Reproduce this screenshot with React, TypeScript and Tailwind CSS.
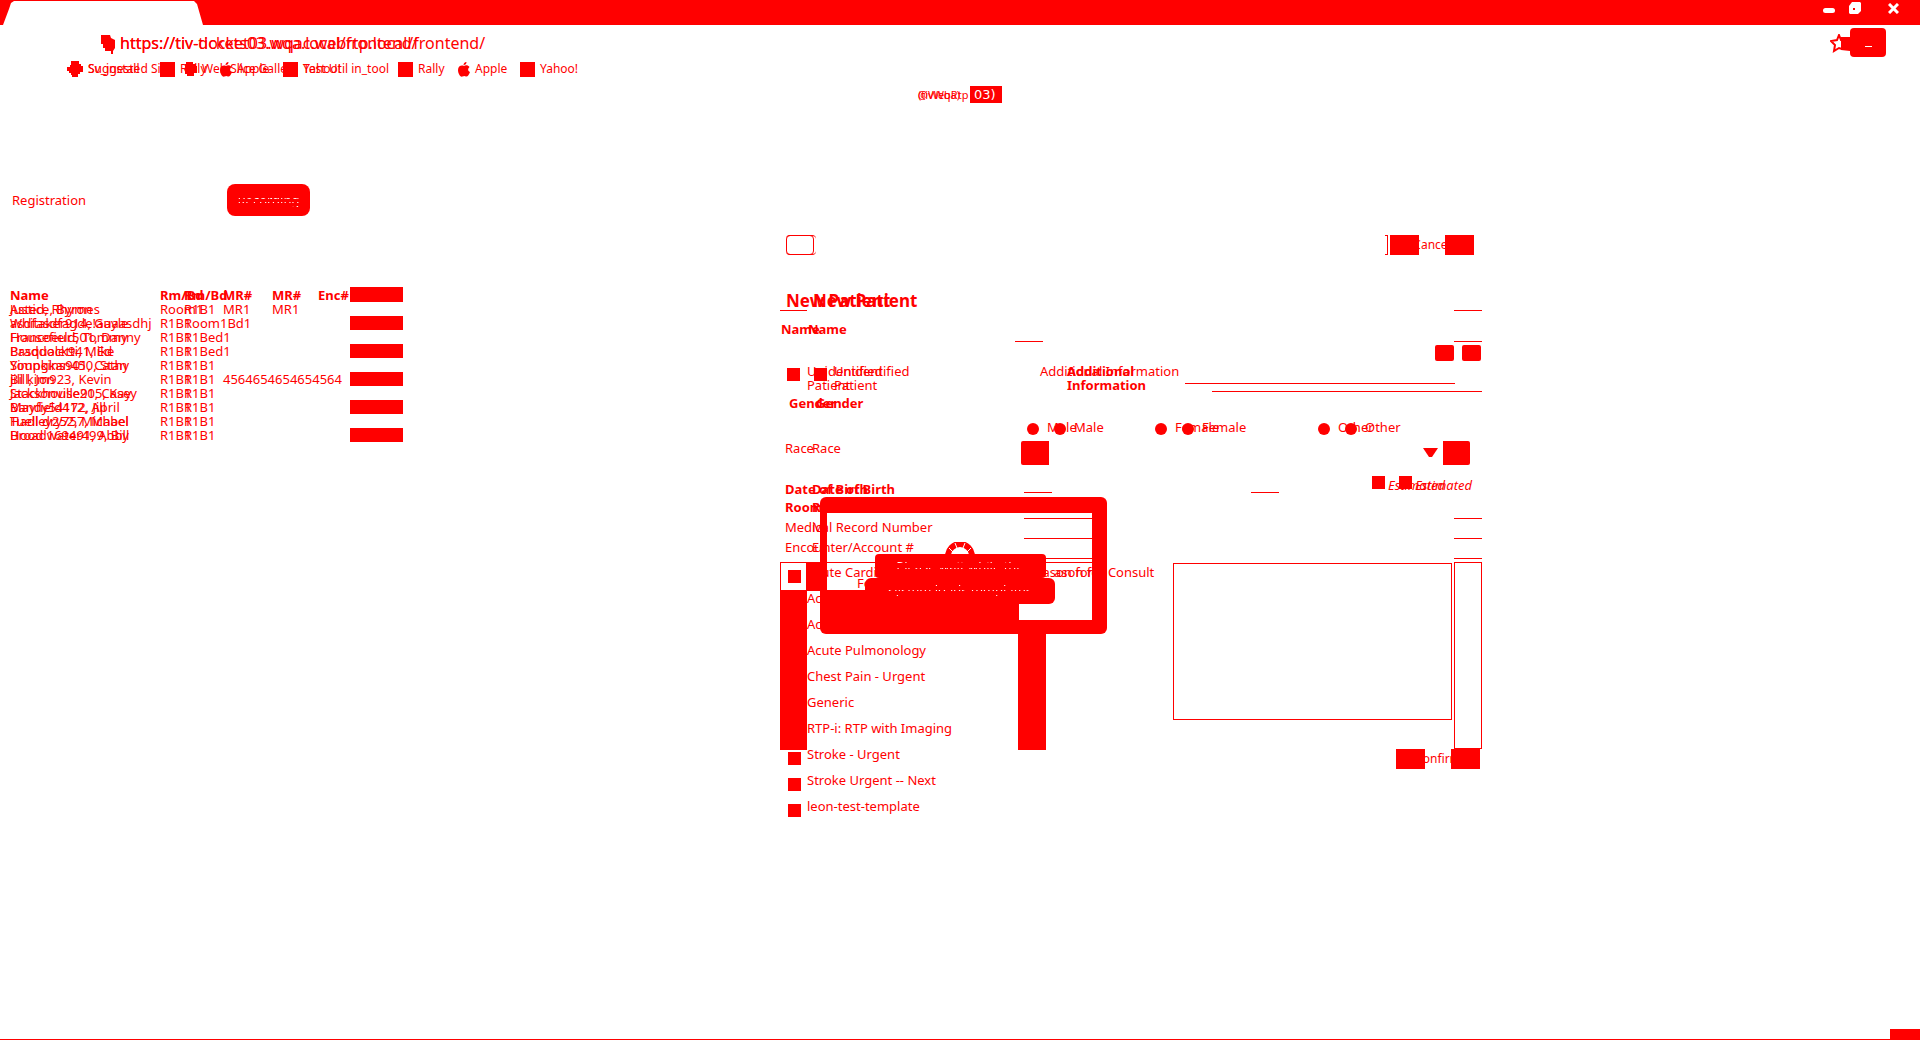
import type { ReactNode } from "react";

const overlay = "col-start-1 row-start-1";

function Twin({ a, b, className = "" }: { a: ReactNode; b?: ReactNode; className?: string }) {
  return (
    <span className={`grid justify-items-start whitespace-nowrap ${className}`}>
      <span className={overlay}>{a}</span>
      <span aria-hidden="true" className={`${overlay} ml-[27px]`}>{b ?? a}</span>
    </span>
  );
}

function AppleIcon() {
  return (
    <svg viewBox="0 0 12 15" className="h-[15px] w-3 shrink-0" fill="#ff0000" aria-hidden="true">
      <path d="M6 4C7 3 10 2.600 11.500 5C9.500 6.500 9.700 9 12 10C11 13 9.500 15 8 14.500C6.500 13.800 6 13.800 4.500 14.500C2 15.500 0 11 0 8C0 4 3.500 2.800 6 4ZM5.500 3C5.500 1.500 6.500 0 8.500 0C8.500 1.800 7.500 3 5.500 3Z" />
    </svg>
  );
}

function CrossIcon() {
  return (
    <svg viewBox="0 0 16 16" className="size-4 shrink-0" fill="#ff0000" aria-hidden="true">
      <path d="M4 0H12V3H14V5H16V11H13V13H11V16H5V14H4V12H2V10H0V6H3V4H4Z" />
    </svg>
  );
}

function BlobIcon() {
  return (
    <svg viewBox="0 0 12 14" className="h-[14px] w-3 shrink-0" fill="#ff0000" aria-hidden="true">
      <path d="M1 0H8V2H11V4H12V11H9V14H2V12H0V2H1Z" />
    </svg>
  );
}

const Square = () => <span className="h-[15px] w-[15px] shrink-0 bg-[#ff0000]" />;

function Bookmark({ icon, label, className }: { icon: ReactNode; label: string; className: string }) {
  return (
    <a href="#" className={`flex shrink-0 items-center gap-[5px] whitespace-nowrap ${className}`}>
      {icon}
      <span>{label}</span>
    </a>
  );
}

function BrowserChrome() {
  return (
    <header>
      <div className="flex h-[25px] justify-between bg-[#ff0000]">
        <svg viewBox="0 0 204 25" className="h-[25px] w-[204px]" aria-hidden="true">
          <path d="M3 25L9 9L11 3L14 1H194L197 4L203 25Z" fill="#ffffff" />
        </svg>
        <div className="flex h-4 items-start pr-[21px] text-white">
          <button aria-label="Minimize" className="mt-2 mr-[14px] h-[5px] w-3 rounded-sm bg-white" />
          <button aria-label="Restore" className="mt-0.5 mr-[27px]">
            <svg viewBox="0 0 12 12" className="size-3" aria-hidden="true">
              <path d="M3 0H11L12 1V9L9 12H1L0 11V4Z" fill="#ffffff" />
              <path d="M4 6H6V8H4Z" fill="#ff0000" />
            </svg>
          </button>
          <button aria-label="Close" className="mt-[3px]">
            <svg viewBox="0 0 11 11" className="size-[11px]" aria-hidden="true">
              <path d="M1 1L10 10M10 1L1 10" stroke="#ffffff" strokeWidth="3" />
            </svg>
          </button>
        </div>
      </div>

      <div className="flex h-8 items-start">
        <svg viewBox="0 0 15 19" className="mt-[10px] ml-[101px] h-[19px] w-[15px]" fill="#ff0000" aria-hidden="true">
          <path d="M0 0H9L10 3L14 5V13L12 16V19H10V16H4V13H2V9H0Z" />
        </svg>
        <div className="ml-1 grid pt-[7px] text-base leading-[22px]">
          <span className={overlay}>https://tiv-tickets03.wqa.local/frontend/</span>
          <span aria-hidden="true" className={overlay}>https://tiv-docket03.wqac.webrtp.local/frontend/</span>
        </div>
        <div className="mt-[3px] mr-[34px] ml-auto flex items-start">
          <svg viewBox="0 0 20 20" className="mt-1.5 h-5 w-[20px]" aria-hidden="true">
            <path d="M9 1L11 6L19 7V15H12L9 14L4 17L5 11L1 7L7 6Z" fill="#ffffff" stroke="#ff0000" strokeWidth="2" />
            <path d="M11 3L20 3V17L11 16Z" fill="#ff0000" />
          </svg>
          <button aria-label="Menu" className="flex h-[29px] w-9 items-center justify-center rounded-sm bg-[#ff0000] pt-2">
            <span className="h-px w-[7px] bg-white" />
          </button>
        </div>
      </div>

      <div className="grid h-6 items-center pl-[67px] text-xs leading-4">
        <nav aria-label="Bookmarks" className={`${overlay} flex items-center`}>
          <Bookmark icon={<CrossIcon />} label="Suggested Sit" className="w-[93px]" />
          <Bookmark icon={<Square />} label="Rally" className="w-[60px]" />
          <Bookmark icon={<AppleIcon />} label="Apple" className="w-[63px]" />
          <Bookmark icon={<Square />} label="Yahoo!" className="w-[60px]" />
        </nav>
        <nav aria-label="More bookmarks" className={`${overlay} flex items-center`}>
          <Bookmark icon={<CrossIcon />} label="Sv_install" className="w-[118px]" />
          <Bookmark icon={<BlobIcon />} label="Web Slice Galle" className="w-[98px]" />
          <Bookmark icon={<Square />} label="Test Util in_tool" className="w-[115px]" />
          <Bookmark icon={<Square />} label="Rally" className="w-[60px]" />
          <Bookmark icon={<AppleIcon />} label="Apple" className="w-[62px]" />
          <Bookmark icon={<Square />} label="Yahoo!" className="w-[80px]" />
        </nav>
      </div>

      <div className="flex h-[27px] justify-center pt-[5px] text-[11px] leading-[17px]">
        <div className="grid w-[52px] whitespace-nowrap">
          <span className={overlay}>@WebRtp</span>
          <span aria-hidden="true" className={overlay}>(tivWqa)</span>
        </div>
        <span className="h-[17px] w-8 bg-[#ff0000] pl-1 font-['DejaVu_Sans'] text-[13px] text-white">03)</span>
      </div>
    </header>
  );
}

type Patient = { name: string; other: string; room: string; bed: string; mr?: string; mr2?: string };

const patients: Patient[] = [
  { name: "Justice, Byron", other: "Asted, Rhymes", room: "Room1", bed: "R1B1", mr: "MR1", mr2: "MR1" },
  { name: "Whitaker914, Gayle", other: "asdfasdfagde!auaasdhj", room: "R1B1", bed: "Room1Bd1" },
  { name: "Francoeur501, Danny", other: "Housefield, Tommy", room: "R1B1", bed: "R1Bed1" },
  { name: "Braddock941, Ed", other: "Pasqualetti, Mike", room: "R1B1", bed: "R1Bed1" },
  { name: "Youngkan450, Stan", other: "Simpkins901, Cathy", room: "R1B1", bed: "R1B1" },
  { name: "Bill, Jon", other: "jill kim923, Kevin", room: "R1B1", bed: "R1B1", mr: "4564654654654564" },
  { name: "Jacksonville905, Kay", other: "Stackhouse21, Casey", room: "R1B1", bed: "R1B1" },
  { name: "Mayfield412, April", other: "Bandy54172, Jill", room: "R1B1", bed: "R1B1" },
  { name: "Hadley252, Michael", other: "Tuell dry757, Mabel", room: "R1B1", bed: "R1B1" },
  { name: "Broadwater499, Bill", other: "Hood 169491, Abby", room: "R1B1", bed: "R1B1" },
];

function PatientPanel() {
  return (
    <section className="pt-[76px]">
      <div className="flex h-8 items-center pl-3">
        <button className="w-[215px] text-left leading-5">
          <span className="grid">
            <span className={overlay}>Registration</span>
          </span>
        </button>
        <button className="h-8 w-[83px] rounded-lg bg-[#ff0000] leading-5">
          <span className="bg-[repeating-linear-gradient(#ff0000_0px,#ff0000_3px,#ffffff_3px,#ffffff_4px)] bg-clip-text text-transparent">
            Recording
          </span>
        </button>
      </div>
      <table className="mt-[71px] ml-2.5 w-[393px] table-fixed border-collapse text-left leading-[14px]">
        <colgroup>
          <col className="w-[150px]" />
          <col className="w-[63px]" />
          <col className="w-[49px]" />
          <col className="w-[46px]" />
          <col className="w-8" />
          <col />
        </colgroup>
        <thead>
          <tr className="h-[15px] whitespace-nowrap">
            <th className="p-0">Name</th>
            <th className="p-0">
              <span className="grid justify-items-start">
                <span className={overlay}>Rm/Bd</span>
                <span className={`${overlay} ml-6`}>Rm/Bd</span>
              </span>
            </th>
            <th className="p-0">MR#</th>
            <th className="p-0">MR#</th>
            <th className="p-0">Enc#</th>
            <th className="bg-[#ff0000] p-0" aria-label="Status" />
          </tr>
        </thead>
        <tbody>
          {patients.map((p, i) => (
            <tr key={p.name} className="h-[14px] whitespace-nowrap">
              <td className="p-0">
                <span className="grid justify-items-start">
                  <span className={overlay}>{p.name}</span>
                  <span className={overlay}>{p.other}</span>
                </span>
              </td>
              <td className="p-0">
                <span className="grid justify-items-start">
                  <span className={overlay}>{p.room}</span>
                  <span className={`${overlay} ml-6`}>{p.bed}</span>
                </span>
              </td>
              <td className="p-0">{p.mr}</td>
              <td className="p-0">{p.mr2}</td>
              <td className="p-0" />
              <td className={i % 2 === 1 ? "bg-[#ff0000] p-0" : "p-0"} />
            </tr>
          ))}
        </tbody>
      </table>
    </section>
  );
}

function Rule({ left, middle, leftWidth = "w-[28px]" }: { left: string; middle?: boolean; leftWidth?: string }) {
  return (
    <div className={`flex h-px justify-between pr-px ${left}`}>
      <span className={`bg-[#ff0000] ${leftWidth}`} />
      {middle ? <span className="mr-[203px] w-[28px] bg-[#ff0000]" /> : <span className="w-[28px] bg-[#ff0000]" />}
    </div>
  );
}

function TwinBoxes({ type, name, label }: { type: "checkbox" | "radio"; name: string; label: string }) {
  const shape = type === "radio" ? "size-3 rounded-full" : "size-[13px]";
  const gap = type === "radio" ? "gap-[15px]" : "gap-[14px]";
  return (
    <span className={`flex shrink-0 ${gap}`}>
      <input type={type} name={name} aria-label={label} className={`appearance-none bg-[#ff0000] ${shape}`} />
      <span className={`bg-[#ff0000] ${shape}`} />
    </span>
  );
}

function RadioOption({ label, className }: { label: string; className: string }) {
  return (
    <label className={`grid shrink-0 justify-items-start ${className}`}>
      <span className={`${overlay} pt-1.5`}>
        <TwinBoxes type="radio" name="gender" label={label} />
      </span>
      <Twin a={label} className={`${overlay} ml-5 leading-5`} />
    </label>
  );
}

function EndButton({ label, className }: { label: string; className: string }) {
  return (
    <button className={`flex h-5 items-center justify-center bg-[linear-gradient(90deg,#ff0000_29px,transparent_29px,transparent_55px,#ff0000_55px)] text-xs leading-5 ${className}`}>
      {label}
    </button>
  );
}

const templates = [
  "Acute Cardiology",
  "Acute Neurology",
  "Acute Pediatrics",
  "Acute Pulmonology",
  "Chest Pain - Urgent",
  "Generic",
  "RTP-i: RTP with Imaging",
  "Stroke - Urgent",
  "Stroke Urgent -- Next",
  "leon-test-template",
];

function LoadingDialog() {
  return (
    <div
      role="dialog"
      aria-label="Loading"
      className="absolute top-[262px] left-10 h-[137px] w-[287px] rounded-md bg-[linear-gradient(#ff0000,#ff0000),linear-gradient(#ff0000,#ff0000),linear-gradient(#ff0000,#ff0000),linear-gradient(#ff0000,#ff0000),linear-gradient(#ff0000,#ff0000)] bg-[size:100%_16px,7px_100%,15px_100%,100%_14px,199px_44px] bg-[position:top,left,right,bottom,left_bottom] bg-no-repeat"
    >
      <div className="flex flex-col items-center pt-[45px] pr-[7px]">
        <svg viewBox="0 0 30 12" className="h-3 w-[30px]" aria-hidden="true">
          <path d="M3 14A12 12 0 0 1 27 14" fill="none" stroke="#ff0000" strokeWidth="6" />
          <path d="M4 6L8 10M10 1L12 6M20 1L18 6M26 6L22 10" stroke="#ffffff" />
        </svg>
        <div className="h-6 w-[171px] rounded-sm bg-[#ff0000] text-center leading-6 whitespace-nowrap">
          <span className="bg-[repeating-linear-gradient(#ff0000_0px,#ff0000_5px,#ffffff_5px,#ffffff_6px)] bg-clip-text text-transparent">
            Please wait while the
          </span>
        </div>
        <div className="h-[26px] w-[190px] rounded-md bg-[#ff0000] text-center leading-6 whitespace-nowrap">
          <span className="bg-[repeating-linear-gradient(#ff0000_0px,#ff0000_4px,#ffffff_4px,#ffffff_5px)] bg-clip-text text-transparent">
            system loads templates
          </span>
        </div>
      </div>
    </div>
  );
}

function PatientForm() {
  return (
    <form className="relative pt-[127px]">
      <div className="relative">
        <div className="flex h-5 justify-between pr-[9px] pl-1.5">
          <button type="button" aria-label="Back" className="grid h-5 w-[30px]">
            <span className={`${overlay} w-7 rounded-sm border border-[#ff0000]`} />
            <span className={`${overlay} rounded-sm border-y border-[#ff0000]`} />
          </button>
          <div className="flex">
            <span className="mr-0.5 w-[3px] border-y border-r border-[#ff0000]" />
            <EndButton label="Cancel" className="w-[84px]" />
          </div>
        </div>

        <h1 className="h-[55px] pt-[34px] pl-1.5 text-[17px] leading-6 font-bold">
          <Twin a="New Patient" />
        </h1>
        <Rule left="pl-0" leftWidth="w-[27px]" />

        <div className="flex h-[30px] pt-2 pl-px leading-5 font-bold">
          <label htmlFor="name" className="w-[234px]">
            <Twin a="Name" />
          </label>
          <input id="name" className="min-w-0 flex-1 bg-transparent" />
        </div>
        <Rule left="pl-[235px]" />

        <div className="flex h-5 justify-end gap-2 pt-[3px] pr-0.5">
          <button type="button" aria-label="Add" className="h-4 w-[19px] rounded-xs bg-[#ff0000]" />
          <button type="button" aria-label="Remove" className="h-4 w-[19px] rounded-xs bg-[#ff0000]" />
        </div>

        <div className="flex h-[33px] leading-[14px]">
          <label className="grid w-[260px] pt-0.5 pl-[7px]">
            <span className={`${overlay} pt-1`}>
              <TwinBoxes type="checkbox" name="unidentified" label="Unidentified Patient" />
            </span>
            <Twin a={<>Unidentified<br />Patient</>} className={`${overlay} ml-5`} />
          </label>
          <label htmlFor="info" className="grid w-[145px] shrink-0 justify-items-start pt-0.5 whitespace-nowrap">
            <span className={overlay}>Additional Information</span>
            <span className={`${overlay} ml-[27px] font-bold`}>Additional<br />Information</span>
          </label>
          <div className="flex flex-1 flex-col gap-[7px] pt-[21px]">
            <span className="mr-7 h-px bg-[#ff0000]" />
            <span className="mr-px ml-[27px] h-px bg-[#ff0000]" />
          </div>
        </div>

        <div className="h-[18px] pl-[9px] leading-4 font-bold">
          <Twin a="Gender" />
        </div>

        <div className="flex h-[25px] pt-1 pl-[247px]">
          <RadioOption label="Male" className="w-[128px]" />
          <RadioOption label="Female" className="w-[163px]" />
          <RadioOption label="Other" className="w-[100px]" />
        </div>

        <div className="flex h-[30px] pr-[13px] pl-[5px]">
          <label htmlFor="race" className="w-[236px] leading-5">
            <Twin a="Race" />
          </label>
          <div className="relative mt-[3px] h-6 flex-1">
            <select id="race" className="h-6 w-full appearance-none rounded-xs border-r-[27px] border-l-[28px] border-[#ff0000] bg-transparent">
              <option aria-label="None" />
            </select>
            <svg viewBox="0 0 15 9" className="absolute top-[7px] right-8 h-[9px] w-[15px]" aria-hidden="true">
              <path d="M0 0H15L9 9H6Z" fill="#ff0000" />
            </svg>
          </div>
        </div>

        <div className="flex h-6 justify-between pl-[5px]">
          <label htmlFor="birth" className="pt-[11px] leading-5 font-bold">
            <Twin a="Date of Birth" />
          </label>
          <label className="grid w-[111px] justify-items-start">
            <span className={`${overlay} pt-2`}>
              <TwinBoxes type="checkbox" name="estimated" label="Estimated" />
            </span>
            <Twin a="Estimated" className={`${overlay} ml-4 pt-[7px] leading-5 italic`} />
          </label>
        </div>
        <Rule left="pl-[244px]" middle />

        <div className="flex h-[25px] pt-1 pl-[5px] leading-5">
          <label htmlFor="room" className="w-[239px] font-bold">
            <Twin a="Room" />
          </label>
          <input id="room" className="min-w-0 flex-1 bg-transparent" />
        </div>
        <Rule left="pl-[244px]" leftWidth="w-[69px]" />

        <div className="flex h-[19px] pl-[5px] leading-4">
          <label htmlFor="record" className="w-[239px]">
            <Twin a="Medical Record Number" b={<span className="block w-2 overflow-hidden">M</span>} />
          </label>
          <input id="record" className="min-w-0 flex-1 bg-transparent" />
        </div>
        <Rule left="pl-[244px]" leftWidth="w-[69px]" />

        <div className="flex h-[19px] pl-[5px] leading-4">
          <label htmlFor="account" className="w-[239px]">
            <Twin a="Encounter/Account #" b={<span className="block w-2 overflow-hidden">E</span>} />
          </label>
          <input id="account" className="min-w-0 flex-1 bg-transparent" />
        </div>
        <Rule left="pl-[244px]" leftWidth="w-[69px]" />

        <div className="mt-[3px] flex h-[187px]">
          <div className="w-[320px] shrink-0 border-t border-[#ff0000]">
            <ul className="h-[187px] w-[266px] bg-[linear-gradient(#ff0000,#ff0000),linear-gradient(#ff0000,#ff0000),linear-gradient(#ff0000,#ff0000),linear-gradient(#ff0000,#ff0000),linear-gradient(#ff0000,#ff0000)] bg-[size:27px_160px,1px_28px,1px_28px,28px_130px,14px_28px] bg-[position:0_27px,0_0,26px_0,238px_57px,27px_0] bg-no-repeat">
              {templates.map((t) => (
                <li key={t} className="h-[26px]">
                  <label className="flex items-start gap-[6px] pl-2 leading-[19px] whitespace-nowrap">
                    <input type="checkbox" className="mt-[7px] size-[13px] appearance-none bg-[#ff0000]" />
                    {t}
                  </label>
                </li>
              ))}
            </ul>
          </div>
          <label htmlFor="reason" className="-ml-[73px] w-[146px] shrink-0 leading-5 whitespace-nowrap">
            <Twin a="Reason for" b="ason for Consult" />
          </label>
          <textarea id="reason" className="mt-px h-[157px] min-w-0 flex-1 resize-none border border-[#ff0000]" />
          <span className="mr-px ml-0.5 w-7 border border-[#ff0000]" />
        </div>
        <div className="flex justify-end pr-[3px]">
          <EndButton label="Confirm" className="w-[84px]" />
        </div>

        <p className="absolute top-[338px] left-[77px] w-[206px] text-left leading-5 whitespace-nowrap">
          For assistance with accounts.
        </p>
        <LoadingDialog />
      </div>
    </form>
  );
}

export default function App() {
  return (
    <div className="flex min-h-screen flex-col bg-white font-['Noto_Sans',sans-serif] text-[13px] text-[#ff0000]">
      <BrowserChrome />
      <main className="grid flex-1 grid-cols-[780fr_703fr_437fr] items-start">
        <PatientPanel />
        <PatientForm />
      </main>
      <footer className="flex h-[11px] items-end justify-end border-b border-[#ff0000]">
        <span className="h-2.5 w-[30px] bg-[#ff0000]" />
      </footer>
    </div>
  );
}
